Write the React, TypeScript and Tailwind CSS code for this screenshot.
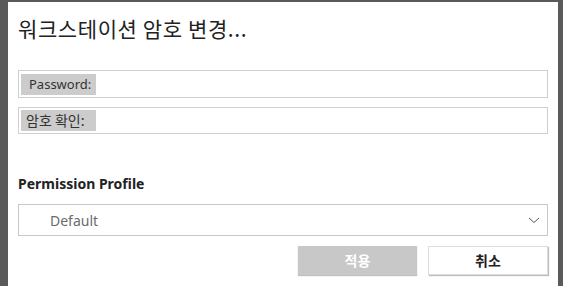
import React from "react";

export default function App() {
  return (
    <div className="w-[563px] h-[286px] bg-[#5a5a5a] pt-[2px] pl-[8px] pr-[5px] overflow-hidden">
      <div className="w-[550px] h-[284px] bg-white flex flex-col px-[10px]">
        <div className="pt-[12px] h-[60px] text-[21px] tracking-[0.6px] text-[#222] leading-[28px] font-['Noto_Sans_CJK_KR',sans-serif]">
          워크스테이션 암호 변경...
        </div>
        <div className="mt-[8px] h-[28px] border border-[#cfcfcf] flex items-center px-[2px]">
          <span className="bg-[#cccccc] h-[21px] w-[75px] pl-[8px] text-[13px] leading-[21px] text-[#333] font-['Noto_Sans','Noto_Sans_CJK_KR',sans-serif]">
            Password:
          </span>
        </div>
        <div className="mt-[9px] h-[27px] border border-[#cfcfcf] flex items-center px-[2px]">
          <span className="bg-[#cccccc] h-[21px] w-[75px] pl-[5px] text-[14px] leading-[21px] text-[#333] font-['Noto_Sans_CJK_KR',sans-serif]">
            암호 확인:
          </span>
        </div>
        <div className="mt-[40px] text-[14px] font-bold text-[#222] leading-[20px] font-['Noto_Sans',sans-serif]">
          Permission Profile
        </div>
        <div className="mt-[10px] h-[32px] border border-[#c8c8c8] flex items-center justify-between pl-[31px] pr-[6px]">
          <span className="text-[14px] text-[#6b6b6b] font-['Noto_Sans',sans-serif]">Default</span>
          <svg width="14" height="14" viewBox="0 0 14 14" fill="none" stroke="#555" strokeWidth="1">
            <path d="M2 5 L7 9.5 L12 5" />
          </svg>
        </div>
        <div className="mt-[10px] flex justify-end gap-[11px]">
          <button className="w-[119px] h-[29px] bg-[#c8c8c8] text-white font-bold text-[14px] shadow-[0_1px_1px_rgba(0,0,0,0.25)] font-['Noto_Sans_CJK_KR',sans-serif]">
            적용
          </button>
          <button className="w-[120px] h-[29px] bg-white border border-[#dcdcdc] text-[#222] font-bold text-[14px] shadow-[1px_1px_1px_rgba(0,0,0,0.25)] font-['Noto_Sans_CJK_KR',sans-serif]">
            취소
          </button>
        </div>
      </div>
    </div>
  );
}
